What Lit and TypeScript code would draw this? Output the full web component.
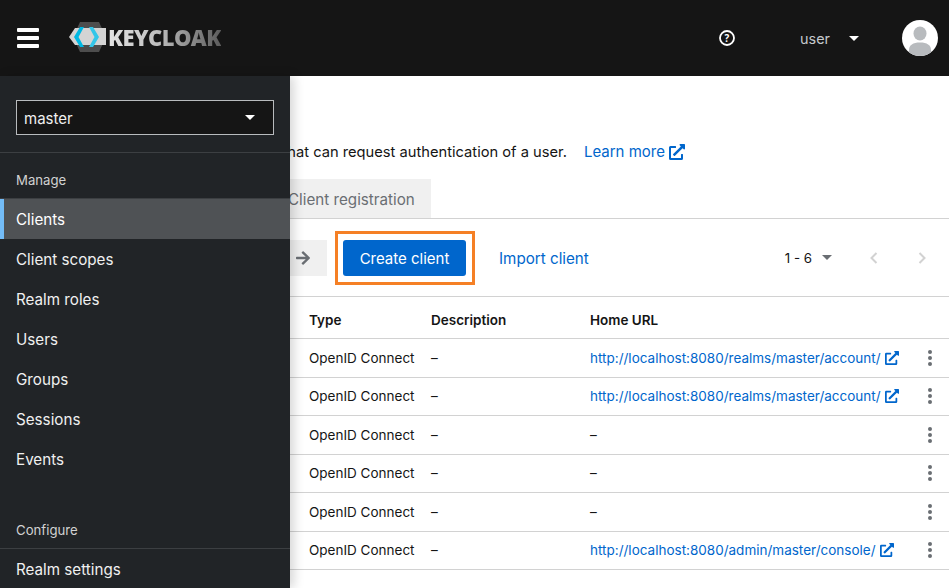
import { LitElement, html, css } from "lit";
import { customElement } from "lit/decorators.js";

const ext = (s: number) => html`<svg class="ext" width=${s} height=${s} viewBox="0 0 512 512" fill="#06c"><path d="M432 320h-32a16 16 0 0 0-16 16v112H64V128h144a16 16 0 0 0 16-16V80a16 16 0 0 0-16-16H48a48 48 0 0 0-48 48v352a48 48 0 0 0 48 48h352a48 48 0 0 0 48-48V336a16 16 0 0 0-16-16zM488 0H360c-21.4 0-32 25.9-17 41l35.700 35.700L135 320.400a24 24 0 0 0 0 34L157.700 377a24 24 0 0 0 34 0l243.600-243.700L471 169c15 15 41 4.500 41-17V24a24 24 0 0 0-24-24z"/></svg>`;

const rows = [
  "http://localhost:8080/realms/master/account/",
  "http://localhost:8080/realms/master/account/",
  "",
  "",
  "",
  "http://localhost:8080/admin/master/console/",
];
const nav = ["Clients", "Client scopes", "Realm roles", "Users", "Groups", "Sessions", "Events"];

@customElement("app-root")
export class AppRoot extends LitElement {
  static styles = css`
    :host { display: block; width: 949px; height: 588px; overflow: hidden; position: relative; background: #fff;
      font-family: Inter, "Noto Sans", sans-serif; color: #151515; font-size: 15px; }
    .top { height: 76px; background: #151515; display: flex; align-items: center; }
    .burger { width: 22px; margin-left: 17px; display: flex; flex-direction: column; gap: 4px; }
    .burger i { display: block; height: 4px; background: #fff; border-radius: 1px; }
    .logo { margin: 0 0 2px 30px; display: flex; align-items: center; }
    .word { font: 800 22px/1 "Open Sans", sans-serif; letter-spacing: -0.6px; 
      background: linear-gradient(90deg, #e4e4e4, #bdbdbd 45%, #5c5c5c); -webkit-background-clip: text; background-clip: text; color: transparent; }
    .spacer { flex: 1; }
    .help { margin-right: 65px; display: flex; }
    .user { color: #c4c8cc; font-size: 14.400px; margin-right: 19px; }
    .caret { width: 0; height: 0; border-left: 5px solid transparent; border-right: 5px solid transparent; border-top: 5px solid #fff; }
    .avatar { margin: 0 11px 0 43px; display: flex; }
    .side { position: absolute; left: 0; top: 76px; bottom: 0; width: 290px; background: #212427; z-index: 2;
      box-shadow: 4px 0 10px rgba(3, 3, 3, 0.16); color: #f0f0f0; overflow: hidden; }
    .realmbox { padding: 24px 16px 16px; border-bottom: 1px solid #3c3f42; height: 36px; }
    .realm { height: 33px; box-sizing: content-box; border: 1px solid #b8bbbe; background: #151515; display: flex; align-items: center;
      justify-content: space-between; padding: 0 18px 0 7px; color: #f0f0f0; }
    .rname { padding-top: 2px; }
    .group { font-size: 13.200px; color: #d2d2d2; padding: 0 16px; height: 20px; line-height: 20px; }
    .g1 { margin-top: 17px; padding-bottom: 8px; border-bottom: 1px solid #3c3f42; }
    .g2 { margin-top: 41px; padding-bottom: 8px; border-bottom: 1px solid #3c3f42; }
    .item { height: 40px; line-height: 42px; padding-left: 16px; font-size: 15.200px; position: relative; color: #f0f0f0; }
    .item.on { background: #4f5255; color: #fff; }
    .item.on::before { content: ""; position: absolute; left: 0; top: 0; bottom: 0; width: 4px; background: #73bcf7; }
    .desc { padding: 57px 0 0 24px; height: 38px; display: flex; align-items: center; white-space: nowrap; font-size: 14.700px; }
    .learn { color: #06c; margin: 0 0 1px 17px; display: inline-flex; align-items: center; gap: 4px; font-size: 15px; }
    .tabs { margin-top: 8px; display: flex; justify-content: flex-start; height: 39px; border-bottom: 1px solid #d2d2d2; padding-left: 272px; }
    .tab { background: #f0f0f0; color: #6a6e73; width: 159px; padding-left: 16px; line-height: 42px; box-sizing: border-box; white-space: nowrap; font-size: 15.200px; }
    .toolbar { height: 77px; border-bottom: 1px solid #d2d2d2; display: flex; align-items: center; position: relative; }
    .arrow { margin-left: 272px; width: 55px; height: 36px; background: #f0f0f0; display: flex; align-items: center; justify-content: flex-end; padding-right: 16px; box-sizing: border-box; }
    .hl { margin-left: 8px; border: 3px solid #f58025; padding: 6px 6px 6px 5px; display: flex; }
    .create { background: #06c; color: #fff; height: 36px; width: 123px; border-radius: 3px; display: flex; align-items: center; justify-content: center; padding-top: 2px; box-sizing: border-box; }
    .import { color: #06c; margin-left: 24px; padding-top: 2px; font-size: 15.200px; }
    .pager { margin-left: auto; display: flex; align-items: center; padding-right: 23px; }
    .range { font-size: 13.300px; }
    .mini { width: 0; height: 0; border-left: 5px solid transparent; border-right: 5px solid transparent; border-top: 5px solid #6a6e73; margin-left: 10px; }
    .prev { margin-left: 38px; }
    .next { margin-left: 40px; }
    .row { display: grid; grid-template-columns: 309px 122px 159px 1fr 38px; align-items: center; border-bottom: 1px solid #d2d2d2; font-size: 13.500px; height: 37.500px; white-space: nowrap; }
    .row.head { height: 36px; font-weight: 600; padding-top: 5px; }
    .link { color: #06c; display: flex; align-items: center; gap: 4px; }
    .kebab { display: flex; flex-direction: column; gap: 2px; align-items: center; justify-self: center; }
    .kebab i { width: 4px; height: 4px; border-radius: 50%; background: #6a6e73; display: block; }
    .ext { flex: none; }
  `;

  render() {
    return html`
      <div class="top">
        <div class="burger"><i></i><i></i><i></i></div>
        <div class="logo">
          <svg width="39" height="32" viewBox="0 0 39 32">
            <polygon points="11,1 30,1 37,16 30,31 11,31 4,16" fill="#4d4d4d"/>
            <polygon points="0,16 6,7 37,7 37,24 6,24" fill="#d4d4d4"/>
            <path d="M11 6 L5 16 L11 26 L15 26 L9.500 16 L15 6 Z" fill="#00b8e3"/>
            <path d="M24 6 L30 16 L24 26 L20 26 L25.500 16 L20 6 Z" fill="#33c6e9"/>
          </svg>
          <span class="word">KEYCLOAK</span>
        </div>
        <div class="spacer"></div>
        <div class="help">
          <svg width="16" height="16" viewBox="0 0 16 16" fill="none"><circle cx="8" cy="8" r="7" stroke="#fff" stroke-width="1.800"/><text x="8" y="11.500" text-anchor="middle" fill="#fff" font-size="10" font-weight="700" font-family="Open Sans">?</text></svg>
        </div>
        <span class="user">user</span>
        <span class="caret"></span>
        <div class="avatar">
          <svg width="36" height="36" viewBox="0 0 36 36">
            <defs><clipPath id="c"><circle cx="18" cy="18" r="18"/></clipPath></defs>
            <circle cx="18" cy="18" r="18" fill="#fff"/>
            <g clip-path="url(#c)" fill="#b8bbbe">
              <ellipse cx="18" cy="13.500" rx="6.500" ry="7"/>
              <path d="M7 36V30c0-5 4-7.500 11-7.500s11 2.500 11 7.500v6z"/>
            </g>
          </svg>
        </div>
      </div>

      <div class="side">
        <div class="realmbox"><div class="realm"><span class="rname">master</span><span class="caret"></span></div></div>
        <div class="group g1">Manage</div>
        ${nav.map((n, i) => html`<div class="item ${i === 0 ? "on" : ""}">${n}</div>`)}
        <div class="group g2">Configure</div>
        <div class="item">Realm settings</div>
      </div>

      <main>
        <div class="desc">
          <span>Clients are applications and services that can request authentication of a user.</span>
          <span class="learn">Learn more ${ext(16)}</span>
        </div>
        <div class="tabs"><div class="tab">Client registration</div></div>
        <div class="toolbar">
          <div class="arrow">
            <svg width="16" height="16" viewBox="0 0 448 512" fill="#6a6e73"><path d="M190.500 66.900l22.200-22.200a24 24 0 0 1 33.900 0L441 239a24 24 0 0 1 0 33.900L246.600 467.300a24 24 0 0 1-33.900 0l-22.200-22.200a24 24 0 0 1 .4-34.300L311.400 296H24a24 24 0 0 1-24-24v-32a24 24 0 0 1 24-24h287.400L190.900 101.200a23.900 23.900 0 0 1-.4-34.300z"/></svg>
          </div>
          <div class="hl"><div class="create">Create client</div></div>
          <span class="import">Import client</span>
          <div class="pager">
            <span class="range">1 - 6</span><span class="mini"></span>
            <svg class="prev" width="8" height="12" viewBox="0 0 8 12" fill="none" stroke="#d2d2d2" stroke-width="2"><path d="M6.500 1L1.500 6l5 5"/></svg>
            <svg class="next" width="8" height="12" viewBox="0 0 8 12" fill="none" stroke="#d2d2d2" stroke-width="2"><path d="M1.500 1l5 5-5 5"/></svg>
          </div>
        </div>
        <div class="row head"><span></span><span>Type</span><span>Description</span><span>Home URL</span><span></span></div>
        ${rows.map(url => html`
          <div class="row">
            <span></span>
            <span>OpenID Connect</span>
            <span>–</span>
            ${url ? html`<span class="link">${url} ${ext(14)}</span>` : html`<span>–</span>`}
            <span class="kebab"><i></i><i></i><i></i></span>
          </div>`)}
      </main>
    `;
  }
}
